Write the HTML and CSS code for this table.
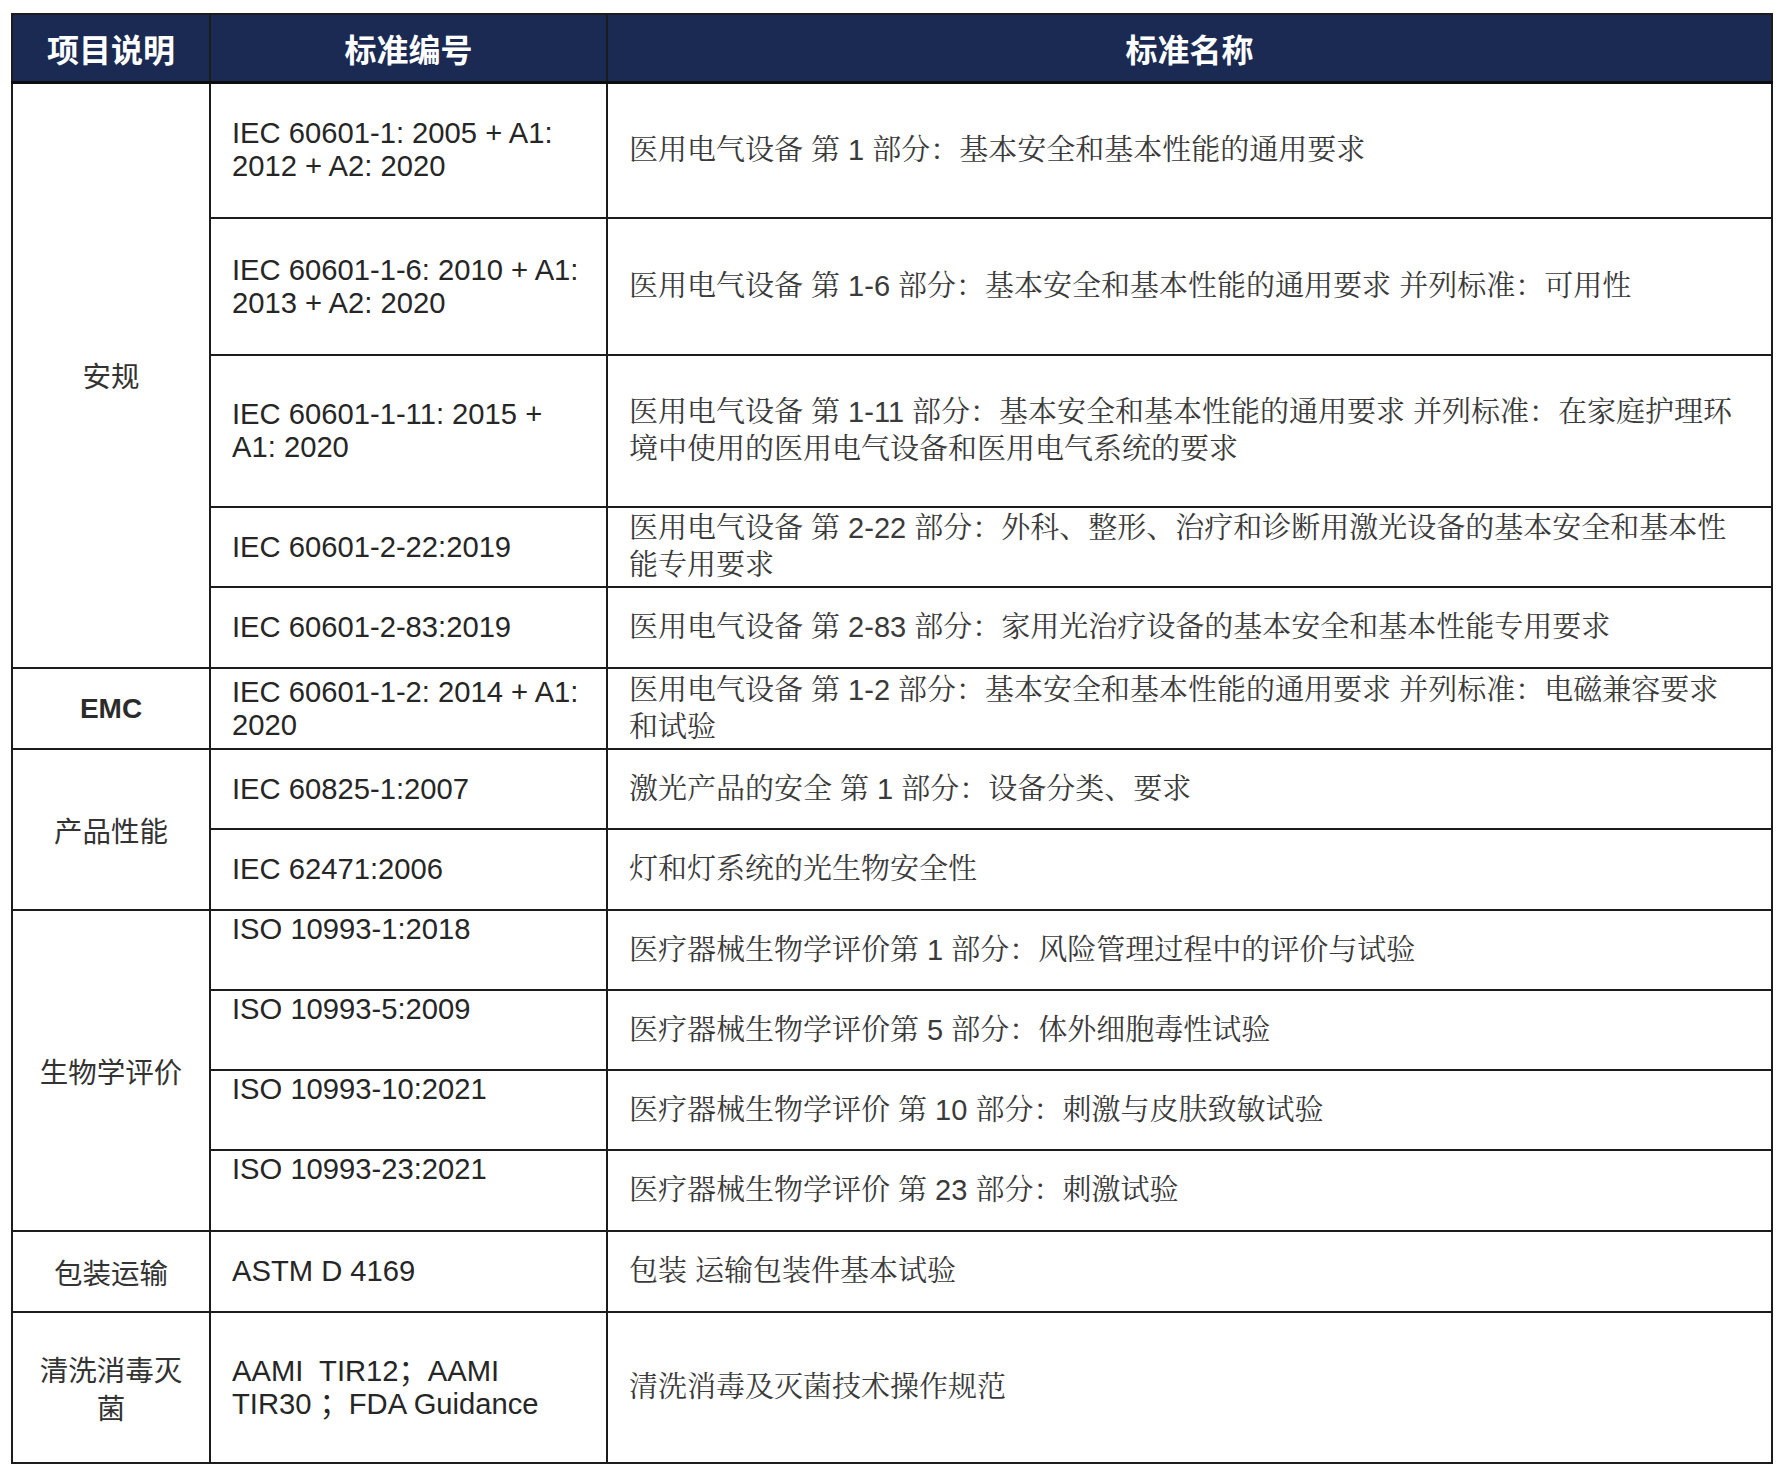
FILE: index.html
```html
<!DOCTYPE html>
<html lang="zh-CN">
<head>
<meta charset="utf-8">
<title>标准</title>
<link rel="stylesheet" href="styles.css">
</head>
<body>
<div class="page">
<table class="std">
  <colgroup>
    <col class="c1">
    <col class="c2">
    <col class="c3">
  </colgroup>
  <thead>
    <tr class="head">
      <th>项目说明</th>
      <th>标准编号</th>
      <th>标准名称</th>
    </tr>
  </thead>
  <tbody>
    <tr class="h136">
      <td class="cat" rowspan="5">安规</td>
      <td class="code">IEC 60601-1: 2005 + A1:<br>2012 + A2: 2020</td>
      <td class="name">医用电气设备 第 1 部分：基本安全和基本性能的通用要求</td>
    </tr>
    <tr class="h137">
      <td class="code">IEC 60601-1-6: 2010 + A1:<br>2013 + A2: 2020</td>
      <td class="name">医用电气设备 第 1-6 部分：基本安全和基本性能的通用要求 并列标准：可用性</td>
    </tr>
    <tr class="h152">
      <td class="code">IEC 60601-1-11: 2015 +<br>A1: 2020</td>
      <td class="name">医用电气设备 第 1-11 部分：基本安全和基本性能的通用要求 并列标准：在家庭护理环<br>境中使用的医用电气设备和医用电气系统的要求</td>
    </tr>
    <tr class="h80">
      <td class="code">IEC 60601-2-22:2019</td>
      <td class="name">医用电气设备 第 2-22 部分：外科、整形、治疗和诊断用激光设备的基本安全和基本性<br>能专用要求</td>
    </tr>
    <tr class="h81">
      <td class="code">IEC 60601-2-83:2019</td>
      <td class="name">医用电气设备 第 2-83 部分：家用光治疗设备的基本安全和基本性能专用要求</td>
    </tr>
    <tr class="h81">
      <td class="cat latin">EMC</td>
      <td class="code">IEC 60601-1-2: 2014 + A1:<br>2020</td>
      <td class="name">医用电气设备 第 1-2 部分：基本安全和基本性能的通用要求 并列标准：电磁兼容要求<br>和试验</td>
    </tr>
    <tr class="h80">
      <td class="cat" rowspan="2">产品性能</td>
      <td class="code">IEC 60825-1:2007</td>
      <td class="name">激光产品的安全 第 1 部分：设备分类、要求</td>
    </tr>
    <tr class="h81">
      <td class="code">IEC 62471:2006</td>
      <td class="name">灯和灯系统的光生物安全性</td>
    </tr>
    <tr class="h80">
      <td class="cat" rowspan="4">生物学评价</td>
      <td class="code top">ISO 10993-1:2018</td>
      <td class="name">医疗器械生物学评价第 1 部分：风险管理过程中的评价与试验</td>
    </tr>
    <tr class="h80">
      <td class="code top">ISO 10993-5:2009</td>
      <td class="name">医疗器械生物学评价第 5 部分：体外细胞毒性试验</td>
    </tr>
    <tr class="h80">
      <td class="code top">ISO 10993-10:2021</td>
      <td class="name">医疗器械生物学评价 第 10 部分：刺激与皮肤致敏试验</td>
    </tr>
    <tr class="h81">
      <td class="code top">ISO 10993-23:2021</td>
      <td class="name">医疗器械生物学评价 第 23 部分：刺激试验</td>
    </tr>
    <tr class="h81">
      <td class="cat">包装运输</td>
      <td class="code">ASTM D 4169</td>
      <td class="name">包装 运输包装件基本试验</td>
    </tr>
    <tr class="h151">
      <td class="cat">清洗消毒灭<br>菌</td>
      <td class="code">AAMI&nbsp; TIR12；AAMI<br>TIR30 ；FDA Guidance</td>
      <td class="name">清洗消毒及灭菌技术操作规范</td>
    </tr>
  </tbody>
</table>
</div>
</body>
</html>
```

FILE: styles.css
```css
html, body {
  margin: 0;
  padding: 0;
  background: #ffffff;
}

.page {
  padding: 13px 0 0 11px;
}

.std {
  border-collapse: collapse;
  table-layout: fixed;
  width: 1760px;
  border: 2px solid #151515;
}

.c1 { width: 198px; }
.c2 { width: 397px; }
.c3 { width: 1165px; }

.std th,
.std td {
  border: 2px solid #1c1c1c;
  padding: 0;
  box-sizing: border-box;
}

.head th {
  height: 68px;
  background: #1b2a52;
  color: #ffffff;
  font-family: "Noto Sans CJK SC", sans-serif;
  font-weight: 700;
  font-size: 32px;
  line-height: 40px;
  text-align: center;
  vertical-align: middle;
  border-bottom: 3px solid #0d0d0d;
}

.h136 { height: 136px; }
.h137 { height: 137px; }
.h152 { height: 152px; }
.h80 { height: 80px; }
.h81 { height: 81px; }
.h151 { height: 151px; }

.cat {
  text-align: center;
  vertical-align: middle;
  font-family: "Noto Sans CJK SC", sans-serif;
  font-size: 28.5px;
  line-height: 38px;
  color: #333333;
}

.cat.latin {
  font-family: "Liberation Sans", Arial, sans-serif;
  font-weight: 700;
  font-size: 28px;
  color: #2b2b2b;
}

.code {
  font-family: "Liberation Sans", Arial, "Noto Sans CJK SC", sans-serif;
  font-size: 29.2px;
  line-height: 33px;
  color: #262626;
  vertical-align: middle;
  padding: 0 8px 0 21px !important;
  white-space: nowrap;
}

.code.top {
  vertical-align: top;
  padding-top: 2px !important;
}

.name {
  font-family: "Liberation Sans", "Noto Serif CJK SC", "Noto Sans CJK SC", serif;
  font-size: 29px;
  line-height: 37px;
  color: #3a3a3a;
  vertical-align: middle;
  padding: 0 8px 0 21px !important;
  white-space: nowrap;
}
```
